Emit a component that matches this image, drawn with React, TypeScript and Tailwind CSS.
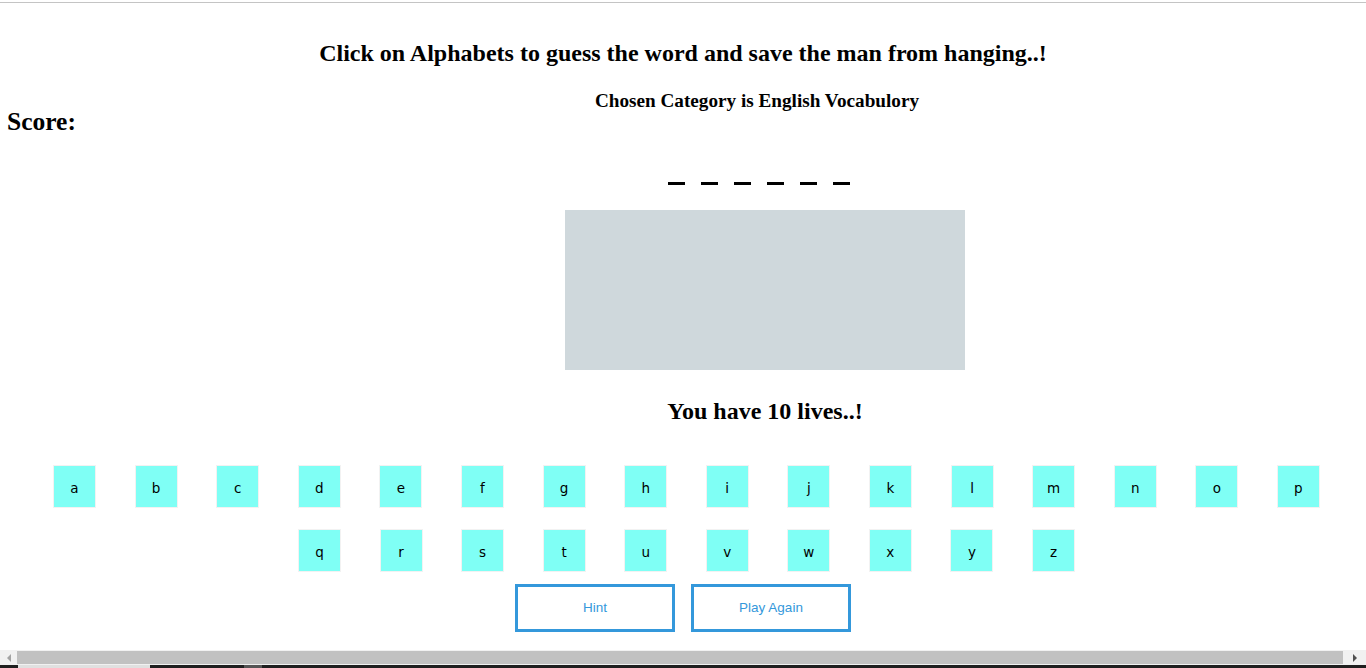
const row1 = 'abcdefghijklmnop'.split('');
const row2 = 'qrstuvwxyz'.split('');

function LetterKey({ letter }: { letter: string }) {
  return (
    <button className="w-[43px] h-[43px] pt-[3px] border border-[#f2f2f2] bg-[#7ffff5] text-[13.5px] text-black flex items-center justify-center [font-family:'Comic_Sans_MS','DejaVu_Sans',sans-serif]">
      {letter}
    </button>
  );
}

export default function App() {
  return (
    <div className="h-[668px] w-[1366px] overflow-hidden bg-white flex flex-col [font-family:'Liberation_Serif',serif] text-black">
      {/* top edge */}
      <div className="h-[2px] shrink-0" />
      <div className="h-px shrink-0 bg-[#c4c4c4]" />

      <main className="flex-1 flex flex-col">
        <h2 className="mt-[36px] h-[28px] leading-[28px] text-[24px] font-bold text-center">
          Click on Alphabets to guess the word and save the man from hanging..!
        </h2>

        <h3 className="mt-[23px] h-[22px] leading-[22px] text-[19.2px] font-bold text-center pl-[148px]">
          Chosen Category is English Vocabulory
        </h3>

        <h2 className="-mt-[4px] h-[28px] leading-[28px] text-[25.5px] font-bold pl-[7px]">Score:</h2>

        {/* word blanks */}
        <div className="mt-[46px] ml-[668px] flex gap-[16px]">
          {Array.from({ length: 6 }).map((_, i) => (
            <div key={i} className="w-[17px] h-[3px] bg-black" />
          ))}
        </div>

        {/* gallows canvas */}
        <div className="mt-[25px] ml-[565px] w-[400px] h-[160px] bg-[#cfd8dc]" />

        <h2 className="mt-[27px] h-[28px] leading-[28px] text-[24px] font-bold text-center pl-[164px]">
          You have 10 lives..!
        </h2>

        {/* alphabet */}
        <div className="mt-[40px] ml-[53px] w-[1267px] flex justify-between">
          {row1.map((l) => (
            <LetterKey key={l} letter={l} />
          ))}
        </div>
        <div className="mt-[21px] ml-[298px] w-[777px] flex justify-between">
          {row2.map((l) => (
            <LetterKey key={l} letter={l} />
          ))}
        </div>

        <div className="mt-[12px] ml-[515px] flex gap-[16px] [font-family:'Liberation_Sans',sans-serif]">
          <button className="w-[160px] h-[48px] border-[3px] border-[#3498db] text-[#3498db] text-[13.5px] bg-white">
            Hint
          </button>
          <button className="w-[160px] h-[48px] border-[3px] border-[#3498db] text-[#3498db] text-[13.5px] bg-white">
            Play Again
          </button>
        </div>
      </main>

      {/* horizontal scrollbar */}
      <div className="h-[15px] shrink-0 bg-[#f1f1f1] flex items-center">
        <div className="w-[17px] flex justify-center">
          <div className="w-0 h-0 border-y-[4px] border-y-transparent border-r-[4px] border-r-[#a3a3a3]" />
        </div>
        <div className="flex-1 h-[13px] bg-[#c1c1c1]" />
        <div className="w-[23px] flex justify-center">
          <div className="w-0 h-0 border-y-[4px] border-y-transparent border-l-[4px] border-l-[#505050]" />
        </div>
      </div>
      <div className="h-[3px] shrink-0 bg-[#1f1f1f] flex">
        <div className="ml-[18px] w-[132px] bg-[#e0e0e0]" />
        <div className="ml-[94px] w-[18px] bg-[#555]" />
      </div>
    </div>
  );
}
